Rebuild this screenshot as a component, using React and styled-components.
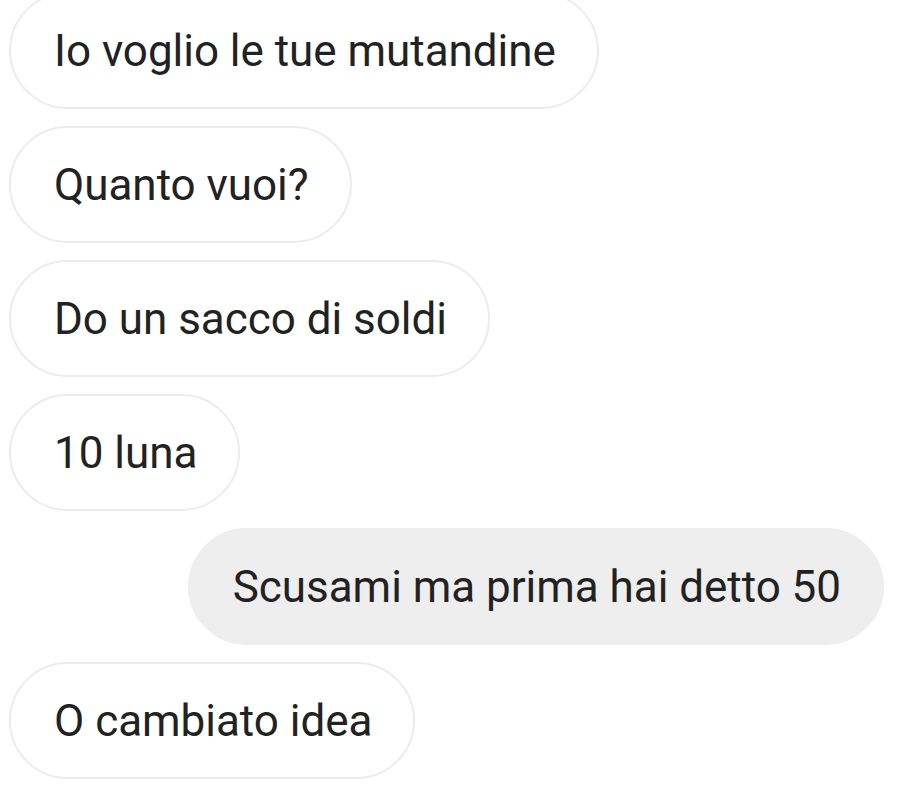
import React from "react";
import styled, { createGlobalStyle } from "styled-components";

const Global = createGlobalStyle`
  html, body { margin: 0; padding: 0; background: #ffffff; }
  body { font-family: Roboto, "Noto Sans", "Liberation Sans", sans-serif; overflow: hidden; }
`;

const Thread = styled.div`
  display: flex;
  flex-direction: column;
  gap: 17px;
  padding: 0 40px 0 9px;
  margin-top: -8px;
`;

const Row = styled.div`
  display: flex;
  justify-content: ${(p) => (p.$mine ? "flex-end" : "flex-start")};
`;

const Bubble = styled.div`
  box-sizing: border-box;
  height: 117px;
  display: flex;
  align-items: center;
  padding: 0 41px 0 43px;
  border-radius: 59px;
  font-size: 44px;
  letter-spacing: -0.03px;
  line-height: 1;
  color: #222222;
  white-space: nowrap;
  background: ${(p) => (p.$mine ? "#eeeeee" : "#ffffff")};
  border: 2px solid ${(p) => (p.$mine ? "#eeeeee" : "#ececec")};
`;

const messages = [
  { text: "Io voglio le tue mutandine" },
  { text: "Quanto vuoi?" },
  { text: "Do un sacco di soldi" },
  { text: "10 luna" },
  { text: "Scusami ma prima hai detto 50", mine: true },
  { text: "O cambiato idea" },
];

export default function App() {
  return (
    <>
      <Global />
      <Thread>
        {messages.map((m, i) => (
          <Row key={i} $mine={m.mine}>
            <Bubble $mine={m.mine}>{m.text}</Bubble>
          </Row>
        ))}
      </Thread>
    </>
  );
}
